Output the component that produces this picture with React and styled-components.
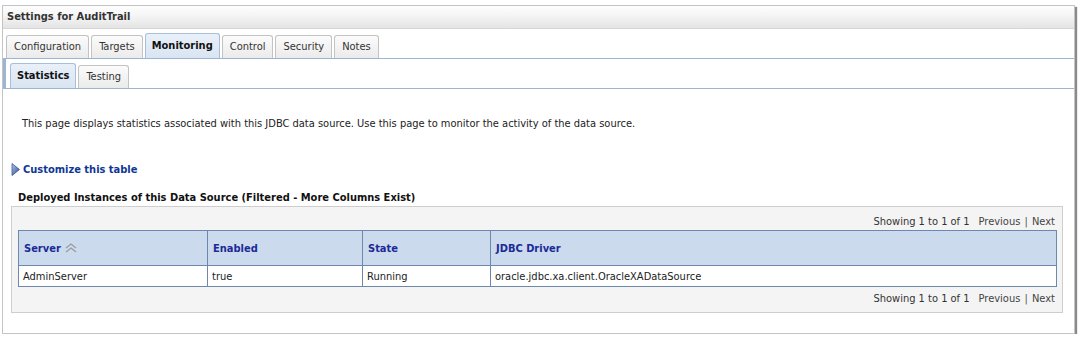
import React from "react";
import styled, { createGlobalStyle } from "styled-components";

const GlobalStyle = createGlobalStyle`
  body {
    margin: 0;
    background: #ffffff;
    font-family: "DejaVu Sans Condensed", "Liberation Sans", sans-serif;
    font-size: 11px;
    color: #222222;
  }
`;

const tabs = ["Configuration", "Targets", "Monitoring", "Control", "Security", "Notes"];
const subTabs = ["Statistics", "Testing"];
const columns = [
  { title: "Server", width: 189, sorted: true },
  { title: "Enabled", width: 155 },
  { title: "State", width: 128 },
  { title: "JDBC Driver" },
];
const rows = [["AdminServer", "true", "Running", "oracle.jdbc.xa.client.OracleXADataSource"]];

const SortIcon = () => (
  <svg width="14" height="10" viewBox="0 0 14 10" style={{ marginLeft: 3 }}>
    <path d="M2 5 L7 1 L12 5" fill="none" stroke="#9a9a9a" strokeWidth="1.2" />
    <path d="M2 9 L7 5 L12 9" fill="none" stroke="#9a9a9a" strokeWidth="1.2" />
  </svg>
);

const DisclosureIcon = () => (
  <svg width="9" height="13" viewBox="0 0 9 13">
    <defs>
      <linearGradient id="tri" x1="0" y1="0" x2="1" y2="1">
        <stop offset="0" stopColor="#b8c9ec" />
        <stop offset="1" stopColor="#24418f" />
      </linearGradient>
    </defs>
    <polygon points="1,0.5 8.5,6.5 1,12.5" fill="url(#tri)" stroke="#3a5596" strokeWidth="0.8" />
  </svg>
);

const Pager = ({ top }) => (
  <PagerRow $top={top}>
    <span>Showing 1 to 1 of 1</span>
    <PagerLinks>
      Previous <Sep>|</Sep> Next
    </PagerLinks>
  </PagerRow>
);

const App = () => {
  return (
    <>
      <GlobalStyle />
      <Panel>
        <Header>Settings for AuditTrail</Header>
        <TabBar>
          {tabs.map((t) => (
            <Tab key={t} $active={t === "Monitoring"}>
              {t}
            </Tab>
          ))}
        </TabBar>
        <SubTabBar>
          {subTabs.map((t) => (
            <Tab key={t} $active={t === "Statistics"}>
              {t}
            </Tab>
          ))}
        </SubTabBar>
        <Content>
          <Description>
            This page displays statistics associated with this JDBC data source. Use this page to monitor the
            activity of the data source.
          </Description>
          <Customize>
            <DisclosureIcon />
            <span>Customize this table</span>
          </Customize>
          <SectionTitle>Deployed Instances of this Data Source (Filtered - More Columns Exist)</SectionTitle>
          <TableBox>
            <Pager top />
            <Table>
              <colgroup>
                {columns.map((c) => (
                  <col key={c.title} style={c.width ? { width: c.width } : undefined} />
                ))}
              </colgroup>
              <thead>
                <tr>
                  {columns.map((c) => (
                    <Th key={c.title}>
                      <ThInner>
                        {c.title}
                        {c.sorted && <SortIcon />}
                      </ThInner>
                    </Th>
                  ))}
                </tr>
              </thead>
              <tbody>
                {rows.map((r, i) => (
                  <tr key={i}>
                    {r.map((cell, j) => (
                      <Td key={j}>{cell}</Td>
                    ))}
                  </tr>
                ))}
              </tbody>
            </Table>
            <Pager />
          </TableBox>
        </Content>
      </Panel>
    </>
  );
};

export default App;

const Panel = styled.div`
  margin: 5px 0 0 2px;
  width: 1073px;
  box-sizing: border-box;
  border: 1px solid #c4c4c4;
  box-shadow: 2px 2px 1px #8a8a8a;
  background: #fff;
`;

const Header = styled.div`
  height: 22px;
  line-height: 22px;
  padding-left: 4px;
  font-weight: bold;
  color: #333;
  background: linear-gradient(to bottom, #fdfdfd 0%, #f6f6f6 40%, #e4e4e4 100%);
  border-bottom: 1px solid #d6d6d6;
`;

const TabBar = styled.div`
  display: flex;
  align-items: flex-end;
  gap: 2px;
  height: 25px;
  margin-top: 4px;
  padding-left: 3px;
  border-bottom: 1px solid #9bb5d2;
`;

const SubTabBar = styled.div`
  display: flex;
  align-items: flex-end;
  gap: 2px;
  height: 29px;
  padding-left: 4px;
  border-left: 3px solid #9bb5d2;
  border-bottom: 1px solid #9bb5d2;
`;

const Tab = styled.div`
  box-sizing: border-box;
  height: ${(p) => (p.$active ? 25 : 23)}px;
  line-height: ${(p) => (p.$active ? 24 : 22)}px;
  padding: ${(p) => (p.$active ? "0 6px 1px" : "0 7px")};
  border: 1px solid ${(p) => (p.$active ? "#a7bfdb" : "#c3c3c3")};
  border-bottom: none;
  border-radius: 3px 3px 0 0;
  font-weight: ${(p) => (p.$active ? "bold" : "normal")};
  color: ${(p) => (p.$active ? "#111" : "#333")};
  background: ${(p) =>
    p.$active
      ? "linear-gradient(to bottom, #e9f0f8, #d9e5f2)"
      : "linear-gradient(to bottom, #fbfbfb, #ebebeb)"};
  white-space: nowrap;
`;

const Content = styled.div`
  padding: 0 10px 20px 8px;
`;

const Description = styled.div`
  margin-top: 28px;
  padding-left: 11px;
  line-height: 14px;
  color: #222;
`;

const Customize = styled.div`
  display: flex;
  align-items: center;
  gap: 3px;
  margin-top: 31px;
  height: 14px;
  font-weight: bold;
  color: #0f3796;
`;

const SectionTitle = styled.div`
  margin-top: 15px;
  padding-left: 7px;
  line-height: 14px;
  font-weight: bold;
  color: #111;
`;

const TableBox = styled.div`
  margin-top: 1px;
  box-sizing: border-box;
  width: 1052px;
  padding: 0 5px 3px 6px;
  background: #f4f4f4;
  border: 1px solid #cecece;
`;

const PagerRow = styled.div`
  box-sizing: border-box;
  display: flex;
  justify-content: flex-end;
  align-items: center;
  gap: 9px;
  height: ${(p) => (p.$top ? 23 : 22)}px;
  padding: ${(p) => (p.$top ? "5px 2px 0 0" : "0 2px 0 0")};
  color: #333;
`;

const PagerLinks = styled.span`
  color: #444;
`;

const Sep = styled.span`
  color: #555;
  margin: 0 1px;
`;

const Table = styled.table`
  width: 100%;
  table-layout: fixed;
  border-collapse: collapse;
  border: 1px solid #6d88ad;
  background: #fff;
`;

const Th = styled.th`
  height: 34px;
  padding: 0 0 0 5px;
  text-align: left;
  font-weight: bold;
  color: #1a2a96;
  background: #ccdaee;
  border: 1px solid #6d88ad;
`;

const ThInner = styled.div`
  display: flex;
  align-items: center;
`;

const Td = styled.td`
  height: 20px;
  padding: 0 0 0 4px;
  color: #222;
  border: 1px solid #6d88ad;
`;
